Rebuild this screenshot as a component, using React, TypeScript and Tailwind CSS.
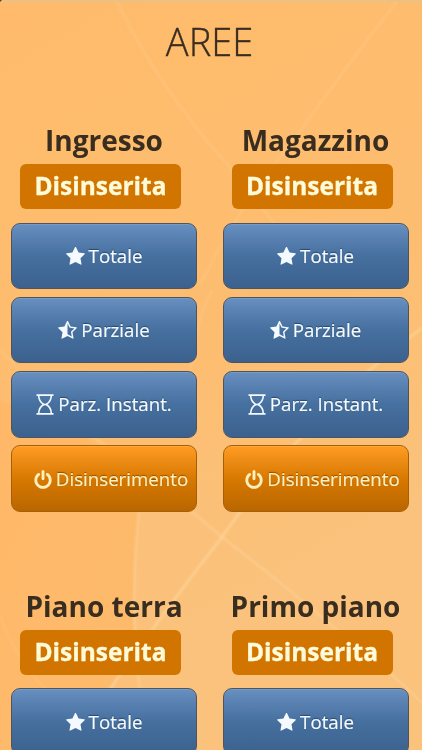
import React from 'react';

const Star = () => (
  <svg width="19" height="19" viewBox="-10 50 1684 1684" fill="currentColor">
    <path d="M1664 647q0 22-26 48l-363 354 86 500q1 7 1 20 0 21-10.5 35.5t-30.5 14.5q-19 0-40-12l-449-236-449 236q-22 12-40 12-21 0-31.5-14.5t-10.5-35.5q0-6 2-20l86-500-364-354q-25-27-25-48 0-37 56-46l502-73 225-455q19-41 49-41t49 41l225 455 502 73q56 9 56 46z" />
  </svg>
);

const HalfStar = () => (
  <svg width="19" height="19" viewBox="54 50 1684 1684" fill="currentColor">
    <path d="M1250 957l257-250-356-52-66-10-30-60-159-322v963l59 31 318 168-60-355-12-66zm452-262l-363 354 86 500q5 33-6 51.5t-34 18.5q-17 0-40-12l-449-236-449 236q-23 12-40 12-23 0-34-18.5t-6-51.5l86-500-364-354q-32-32-23-59.5t54-34.5l502-73 225-455q20-41 49-41 28 0 49 41l225 455 502 73q45 7 54 34.5t-24 59.5z" />
  </svg>
);

const Power = () => (
  <svg width="18" height="19" viewBox="118 -10 1556 1690" fill="currentColor">
    <path d="M1664 896q0 156-61 298t-164 245-245 164-298 61-298-61-245-164-164-245-61-298q0-182 80.5-343t226.5-270q43-32 95.5-25t83.5 50q32 42 24.5 94.5t-49.5 84.5q-98 74-151.5 181t-53.5 228q0 104 40.5 198.5t109.5 163.5 163.5 109.5 198.5 40.5 198.5-40.5 163.5-109.5 109.5-163.5 40.5-198.5q0-121-53.5-228t-151.5-181q-42-32-49.5-84.5t24.5-94.5q31-43 84-50t95 25q146 109 226.5 270t80.5 343zm-640-768v640q0 52-38 90t-90 38-90-38-38-90v-640q0-52 38-90t90-38 90 38 38 90z" />
  </svg>
);

const Hourglass = () => (
  <svg width="18" height="21" viewBox="0 0 18 21" fill="none" stroke="currentColor" strokeWidth="1.6">
    <path d="M0.5 1.2H17.5M0.5 19.8H17.5" strokeWidth="1.8" />
    <path d="M2.7 1.5C2.7 6 5 8.8 7.8 10.5C5 12.2 2.7 15 2.7 19.5M15.3 1.5C15.3 6 13 8.8 10.2 10.5C13 12.2 15.3 15 15.3 19.5" />
    <path d="M7.5 10.5H10.5" />
  </svg>
);

const blue =
  'border-[#4b5561] bg-linear-to-b from-[#678fc0] via-[#46709f] via-50% to-[#3c618e] text-[#f4faff] [text-shadow:0_-1px_1px_#294765]';
const orange =
  'border-[#a65f09] bg-linear-to-b from-[#ff9c22] via-[#d87900] via-50% to-[#b96600] text-[#fff0bd] pl-[14px] [text-shadow:0_-1px_1px_#884c00]';

type ActionItem = { icon: React.ReactNode; label: string; tone: string };

const actions: ActionItem[] = [
  { icon: <Star />, label: 'Totale', tone: blue },
  { icon: <HalfStar />, label: 'Parziale', tone: blue },
  { icon: <Hourglass />, label: 'Parz. Instant.', tone: blue },
  { icon: <Power />, label: 'Disinserimento', tone: orange },
];

function Action({ icon, label, tone }: ActionItem) {
  return (
    <button
      className={`flex h-[66.5px] w-full shrink-0 items-center justify-center gap-[4px] rounded-[9px] border pt-[1px] text-[18.7px] leading-none whitespace-nowrap shadow-[inset_0_1px_0_rgba(255,255,255,0.12)] [-webkit-text-stroke:0.2px_currentColor] ${tone}`}
    >
      <span className="flex shrink-0 items-center">{icon}</span>
      <span>{label}</span>
    </button>
  );
}

function Area({ name, items }: { name: string; items: ActionItem[] }) {
  return (
    <section className="flex w-[186px] flex-col items-center">
      <h2 className="text-[28px] leading-[38px] font-bold whitespace-nowrap text-[#392d20]">{name}</h2>
      <div className="mt-[5px] mr-[7px] flex h-[45px] w-[161px] items-center justify-center rounded-[6px] bg-[#d17500] pb-[1px] text-[24.5px] leading-none font-bold text-[#fffbd8] [-webkit-text-stroke:0.3px_currentColor]">
        Disinserita
      </div>
      <div className="mt-[13.5px] flex w-full flex-col gap-[7.8px]">
        {items.map((item) => (
          <Action key={item.label} {...item} />
        ))}
      </div>
    </section>
  );
}

function Backdrop() {
  return (
    <svg className="absolute inset-0" width="422" height="750" viewBox="0 0 422 750" fill="none">
      <defs>
        <linearGradient id="base" x1="0" y1="0" x2="422" y2="750" gradientUnits="userSpaceOnUse">
          <stop stopColor="#ffbb6b" />
          <stop offset="0.45" stopColor="#fdbd70" />
          <stop offset="0.75" stopColor="#fac27c" />
          <stop offset="1" stopColor="#fac27b" />
        </linearGradient>
        <linearGradient id="fold" x1="0" y1="500" x2="200" y2="600" gradientUnits="userSpaceOnUse">
          <stop stopColor="#ffb868" />
          <stop offset="1" stopColor="#fdbb6d" />
        </linearGradient>
        <filter id="soft" x="0" y="0" width="422" height="750" filterUnits="userSpaceOnUse">
          <feGaussianBlur stdDeviation="0.8" />
        </filter>
      </defs>
      <path d="M0 0H422V750H0Z" fill="url(#base)" />
      <path d="M0 400Q110 440 194 512L222 537Q165 610 109 690L70 750H0Z" fill="url(#fold)" />
      <path d="M139 512Q129 590 137 690L109 690Q165 610 222 537L194 512Z" fill="#fbc17a" />
      <g filter="url(#soft)">
        <path d="M116 0Q160 90 228 165L275 224M398 0Q340 75 290 145Q240 205 200 285" stroke="#ffca87" strokeWidth="3" opacity="0.42" />
        <path d="M0 347Q7 360 20 370M212 290Q198 315 190 370" stroke="#ffcb89" strokeWidth="3" opacity="0.35" />
        <path d="M422 328Q310 410 222 537Q165 610 109 690" stroke="#ffdaa4" strokeWidth="2.6" opacity="0.6" />
        <path d="M139 510Q129 600 140 690" stroke="#ffd49a" strokeWidth="2.5" opacity="0.5" />
        <path d="M90 435Q150 475 222 537Q300 597 360 650Q395 675 422 703" stroke="#ffd9a5" strokeWidth="2.5" opacity="0.4" />
        <path d="M0 615Q18 665 47 690" stroke="#ffcb89" strokeWidth="3" opacity="0.3" />
      </g>
      <path d="M0 0.75H422" stroke="#e5c18d" strokeWidth="1.5" />
      <path d="M0 0H2L0 2Z" fill="#5a4630" />
    </svg>
  );
}

export default function App() {
  return (
    <main className="relative h-[750px] w-[422px] overflow-hidden bg-[#fdbd70] font-['Open_Sans',sans-serif]">
      <Backdrop />
      <div className="relative flex flex-col pt-[15px]">
        <h1 className="pr-[3px] text-center text-[38px] leading-[52px] font-light text-[#392d20] [-webkit-text-stroke:0.35px_currentColor]">
          AREE
        </h1>
        <div className="mt-[54px] grid grid-cols-[186px_186px] gap-x-[25.5px] pl-[11px]">
          <Area name="Ingresso" items={actions} />
          <Area name="Magazzino" items={actions} />
        </div>
        <div className="mt-[75px] grid grid-cols-[186px_186px] gap-x-[25.5px] pl-[11px]">
          <Area name="Piano terra" items={actions.slice(0, 1)} />
          <Area name="Primo piano" items={actions.slice(0, 1)} />
        </div>
      </div>
    </main>
  );
}
